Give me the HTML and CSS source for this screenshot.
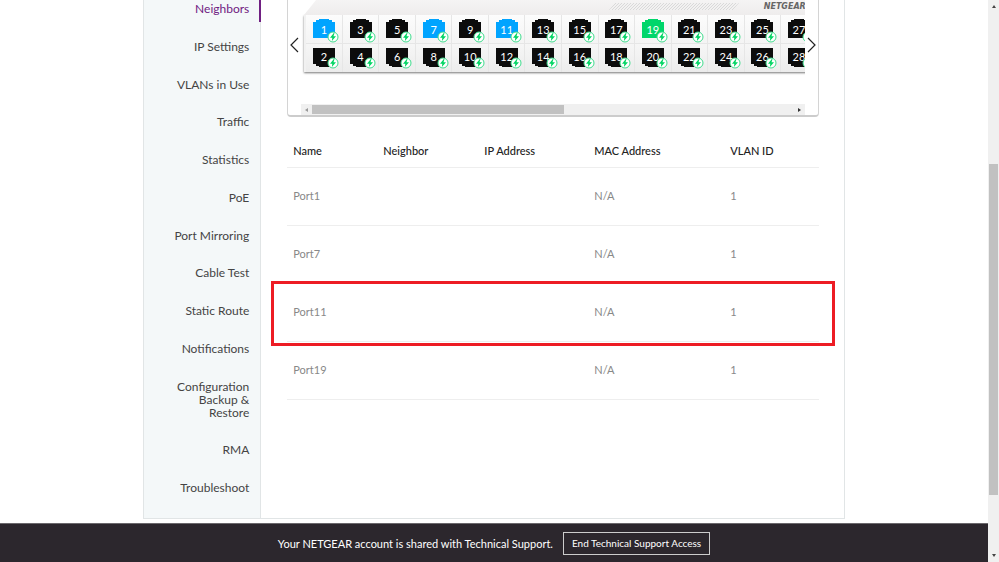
FILE: index.html
```html
<!DOCTYPE html>
<html lang="en">
<head>
  <meta charset="UTF-8">
  <meta name="viewport" content="width=device-width, initial-scale=1.0">
  <title>Neighbors</title>
  <link rel="stylesheet" href="styles.css">
</head>
<body>
  <!-- shared icons -->
  <svg class="icon-defs" aria-hidden="true">
    <symbol id="jack" viewBox="0 0 22 19">
      <path d="M6 0h10v1h3v2h3v16H0V3h3V1h3z"/>
    </symbol>
    <symbol id="bolt" viewBox="0 0 12 12">
      <circle cx="6" cy="6" r="5" fill="#fff" stroke="#3ddc8c" stroke-width="1"/>
      <path d="M6.800 2 3 6.700h2.300L4.900 10 9 5.200H6.500l1-3.200z" fill="#00d563"/>
    </symbol>
  </svg>

  <div class="page">
    <div class="shell">
      <nav class="sidebar">
        <ul class="menu">
          <li class="active"><a href="#">Neighbors</a></li>
          <li><a href="#">IP Settings</a></li>
          <li><a href="#">VLANs in Use</a></li>
          <li><a href="#">Traffic</a></li>
          <li><a href="#">Statistics</a></li>
          <li><a href="#">PoE</a></li>
          <li><a href="#">Port Mirroring</a></li>
          <li><a href="#">Cable Test</a></li>
          <li><a href="#">Static Route</a></li>
          <li><a href="#">Notifications</a></li>
          <li><a href="#">Configuration<br>Backup &amp;<br>Restore</a></li>
          <li><a href="#">RMA</a></li>
          <li><a href="#">Troubleshoot</a></li>
        </ul>
      </nav>

      <main class="content">
        <section class="device">
          <button class="arrow" aria-label="Previous ports">
            <svg width="9" height="16" viewBox="0 0 9 16"><path d="M8 1 1 8l7 7"/></svg>
          </button>
          <div class="device-view">
            <div class="device-top">
              <svg class="lid" viewBox="0 0 511 15" preserveAspectRatio="none" aria-hidden="true">
                <defs>
                  <linearGradient id="lidFill" x1="0" y1="0" x2="0" y2="1">
                    <stop offset="0" stop-color="#f5f4f4"/>
                    <stop offset="1" stop-color="#eeecec"/>
                  </linearGradient>
                </defs>
                <path d="M12 0H511V15H0z" fill="url(#lidFill)"/>
              </svg>
              <span class="vent"></span>
              <span class="brand">NETGEAR</span>
            </div>
            <div class="ports" id="ports"></div>
            <div class="hscroll">
              <span class="tri left"></span>
              <span class="hthumb"></span>
              <span class="tri right"></span>
            </div>
          </div>
          <button class="arrow" aria-label="Next ports">
            <svg width="9" height="16" viewBox="0 0 9 16"><path d="M1 1l7 7-7 7"/></svg>
          </button>
        </section>

        <table class="neighbors">
          <colgroup>
            <col class="col-name">
            <col class="col-neighbor">
            <col class="col-ip">
            <col class="col-mac">
            <col>
          </colgroup>
          <thead>
            <tr><th>Name</th><th>Neighbor</th><th>IP Address</th><th>MAC Address</th><th>VLAN ID</th></tr>
          </thead>
          <tbody>
            <tr><td>Port1</td><td></td><td></td><td>N/A</td><td>1</td></tr>
            <tr><td>Port7</td><td></td><td></td><td>N/A</td><td>1</td></tr>
            <tr class="marked"><td>Port11</td><td></td><td></td><td>N/A</td><td>1</td></tr>
            <tr><td>Port19</td><td></td><td></td><td>N/A</td><td>1</td></tr>
          </tbody>
        </table>
      </main>
    </div>

    <footer class="support-bar">
      <span>Your NETGEAR account is shared with Technical Support.</span>
      <button class="btn-end">End Technical Support Access</button>
    </footer>
  </div>

  <div class="vscroll">
    <span class="tri up"></span>
    <span class="vthumb"></span>
    <span class="tri down"></span>
  </div>

  <script>
    const PORT_COUNT = 28;
    const portState = { 1: "blue", 7: "blue", 11: "blue", 19: "green" };

    // odd ports on the upper row, even ports on the lower row
    function renderPorts() {
      const ports = document.getElementById("ports");
      for (let n = 1; n <= PORT_COUNT; n++) {
        const port = document.createElement("div");
        port.className = "port " + (n % 2 ? "odd " : "even ") + (portState[n] || "");
        port.innerHTML =
          '<div class="jack-box">' +
          '<svg class="jack"><use href="#jack"/></svg>' +
          '<span class="num">' + n + '</span>' +
          '<svg class="bolt"><use href="#bolt"/></svg>' +
          '</div>';
        ports.appendChild(port);
      }
    }

    renderPorts();
  </script>
</body>
</html>
```

FILE: styles.css
```css
* {
  box-sizing: border-box;
}

body {
  margin: 0;
  min-height: 100vh;
  display: flex;
  background: #fff;
  color: #333;
  font-family: Lato, "Liberation Sans", sans-serif;
  font-size: 11px;
}

button {
  font-family: inherit;
  cursor: pointer;
}

.icon-defs {
  position: absolute;
  width: 0;
  height: 0;
}

.page {
  flex: 1;
  min-width: 0;
  display: flex;
  flex-direction: column;
}

.shell {
  flex: 1;
  width: 71%;
  margin: 0 auto 4px;
  display: flex;
  border: 1px solid #e1e5e6;
  border-top: none;
}

/* Sidebar */
.sidebar {
  width: 117px;
  display: flex;
  background: #f4f8f9;
  border-right: 1px solid #e1e5e6;
}

.menu {
  flex: 1;
  margin: 0;
  padding: 2px 0 24px;
  display: flex;
  flex-direction: column;
  justify-content: space-between;
  list-style: none;
  text-align: right;
  font-size: 12px;
  line-height: 13px;
}

.menu li {
  position: relative;
  padding-right: 11px;
}

.menu a {
  color: #444;
  text-decoration: none;
}

.menu .active a {
  color: #702082;
}

.menu .active::after {
  content: "";
  position: absolute;
  top: -3px;
  right: -1px;
  bottom: -7px;
  width: 2px;
  background: #702082;
}

/* Main column */
.content {
  flex: 1;
  min-width: 0;
  padding: 0 25px 0 26px;
}

.device {
  display: flex;
  height: 117px;
  border: 1px solid #d4d4d4;
  border-top: none;
  border-bottom: 2px solid #ccc;
  border-radius: 0 0 4px 4px;
}

.arrow {
  width: 13px;
  height: 90px;
  padding: 0;
  border: none;
  background: none;
  display: flex;
  align-items: center;
  justify-content: center;
}

.arrow path {
  fill: none;
  stroke: #222;
  stroke-width: 1.2;
}

.device-view {
  flex: 1;
  min-width: 0;
  overflow: hidden;
  display: flex;
  flex-direction: column;
}

.device-top {
  position: relative;
  height: 15px;
  margin: 0 -13px 0 3px;
}

.lid {
  display: block;
  width: 100%;
  height: 15px;
}

.vent {
  position: absolute;
  top: 3px;
  left: 60%;
  width: 124px;
  height: 7px;
  transform: skewX(-40deg);
  background: repeating-linear-gradient(90deg, #d9d9d9 0 1px, #f2f1f1 1px 3px);
}

.brand {
  position: absolute;
  top: 2px;
  right: 12px;
  color: #666;
  font: italic bold 8px/10px "DejaVu Sans", sans-serif;
}

.ports {
  display: grid;
  grid-template-columns: repeat(14, 1fr);
  grid-template-rows: 29px 28px;
  grid-auto-flow: column;
  margin: 0 -13px 0 3px;
  padding-left: 2px;
  background: #f1f1f1;
  box-shadow: 0 1px 2px #777;
}

.port {
  display: flex;
  justify-content: center;
  padding-top: 4px;
  border-right: 1px solid #e6e6e6;
  background: linear-gradient(#fcfcfc, #f4f4f4);
}

.port.odd {
  border-bottom: 1px solid #e6e6e6;
}

.port.even {
  background: linear-gradient(#f6f6f6, #ececec);
}

.jack-box {
  position: relative;
  width: 22px;
  height: 19px;
}

.jack {
  display: block;
  width: 22px;
  height: 19px;
  fill: #0c0c0c;
}

.even .jack {
  transform: scaleY(-1);
}

.blue .jack {
  fill: #00a4ff;
}

.green .jack {
  fill: #00d66b;
}

.num {
  position: absolute;
  inset: 0;
  padding-top: 5px;
  color: #fff;
  text-align: center;
  font-size: 11px;
  line-height: 12px;
}

.even .num {
  padding-top: 3px;
}

.bolt {
  position: absolute;
  right: -4px;
  bottom: -5px;
  width: 12px;
  height: 12px;
}

.even .bolt {
  bottom: -2px;
}

/* Scrollbars */
.hscroll {
  height: 11px;
  margin-top: auto;
  display: grid;
  grid-template-columns: 11px 1fr 1fr;
  align-items: center;
  background: #f0f0f0;
}

.hthumb {
  height: 9px;
  margin-right: -5px;
  background: #c1c1c1;
}

.vscroll {
  width: 11px;
  display: grid;
  grid-template-rows: 164fr 331fr 67fr;
  justify-items: center;
  background: #f0f0f0;
}

.vthumb {
  width: 9px;
  background: #c1c1c1;
}

.tri {
  width: 0;
  height: 0;
  border: 2px solid transparent;
}

.tri.left {
  border-right: 3px solid #999;
  border-left: none;
  margin-left: 4px;
}

.tri.right {
  border-left: 3px solid #333;
  border-right: none;
  justify-self: end;
  margin-right: 4px;
}

.tri.up {
  border-bottom: 3px solid #444;
  border-top: none;
  margin-top: 5px;
}

.tri.down {
  border-top: 3px solid #444;
  border-bottom: none;
  align-self: end;
  margin-bottom: 5px;
}

/* Neighbors table */
.neighbors {
  width: 100%;
  margin-top: 19px;
  border-collapse: separate;
  border-spacing: 0;
  table-layout: fixed;
}

.col-name {
  width: 90px;
}

.col-neighbor {
  width: 101px;
}

.col-ip {
  width: 110px;
}

.col-mac {
  width: 136px;
}

.neighbors th,
.neighbors td {
  padding: 0 0 2px 6px;
  text-align: left;
  border-bottom: 1px solid #eee;
}

.neighbors th {
  height: 32px;
  color: #222;
  font-weight: 500;
}

.neighbors td {
  height: 58px;
  color: #888;
}

.marked {
  position: relative;
}

/* highlight frame round the row */
.marked td:first-child::after {
  content: "";
  position: absolute;
  top: -3px;
  right: -16px;
  bottom: -4px;
  left: -16px;
  border: 3px solid #ed1c24;
}

/* Support bar */
.support-bar {
  min-height: 39px;
  display: flex;
  align-items: center;
  justify-content: center;
  gap: 10px;
  background: #2c272d;
  border-top: 1px solid #6b686c;
  color: #fff;
}

.btn-end {
  height: 23px;
  padding: 0 8px;
  border: 1px solid #ccc;
  background: none;
  color: #fff;
  font-size: 10px;
}
```
